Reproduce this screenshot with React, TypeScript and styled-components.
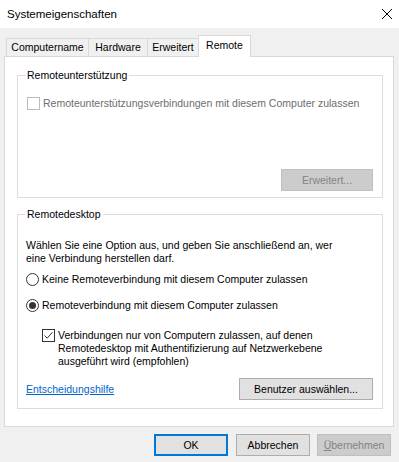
import React from "react";
import styled, { createGlobalStyle } from "styled-components";

const GlobalStyle = createGlobalStyle`
  html, body { margin: 0; padding: 0; background: #f0f0f0; }
  body {
    font-family: "Liberation Sans", Arial, sans-serif;
    font-size: 10.5px;
    color: #000;
  }
  * { box-sizing: border-box; }
`;

const Window = styled.div`
  width: 399px;
  height: 462px;
  background: #f0f0f0;
  display: flex;
  flex-direction: column;
  overflow: hidden;
`;

const TitleBar = styled.div`
  height: 28px;
  flex: none;
  background: #fff;
  display: flex;
  align-items: center;
  justify-content: space-between;
  padding: 0 7px 0 7px;
`;

const Title = styled.span`
  font-size: 11.5px;
  line-height: 14px;
`;

const CloseIcon = styled.svg`
  width: 10px;
  height: 10px;
  display: block;
`;

const Body = styled.div`
  padding: 7px 5px 0 4px;
  display: flex;
  flex-direction: column;
`;

const TabStrip = styled.div`
  display: flex;
  align-items: flex-end;
  height: 21px;
  padding-left: 2px;
`;

const Tab = styled.div<{ $w: number; $active?: boolean }>`
  width: ${(p) => p.$w}px;
  height: ${(p) => (p.$active ? 22 : 18)}px;
  margin-left: -1px;
  margin-bottom: ${(p) => (p.$active ? -1 : 0)}px;
  padding-bottom: ${(p) => (p.$active ? 2 : 0)}px;
  border: 1px solid #d9d9d9;
  border-bottom: none;
  background: ${(p) => (p.$active ? "#fff" : "#f0f0f0")};
  display: flex;
  align-items: center;
  justify-content: center;
  position: relative;
  z-index: ${(p) => (p.$active ? 1 : 0)};
  white-space: nowrap;
  line-height: 13px;
  &:first-child { margin-left: 0; }
`;

const Panel = styled.div`
  height: 371px;
  border: 1px solid #d9d9d9;
  background: #fff;
  padding: 12px 10px 0 12px;
  display: flex;
  flex-direction: column;
`;

const Group = styled.fieldset<{ $h: number; $gap?: number }>`
  margin: ${(p) => p.$gap ?? 0}px 0 0 0;
  padding: 0;
  border: 1px solid #dcdcdc;
  height: ${(p) => p.$h}px;
  min-width: 0;
  flex: none;
`;

const Legend = styled.legend`
  padding: 0 2px;
  margin-left: 7px;
  line-height: 13px;
`;

const Row = styled.div<{ $top: number; $left: number; $disabled?: boolean }>`
  display: flex;
  align-items: flex-start;
  gap: 3px;
  margin: ${(p) => p.$top}px 0 0 ${(p) => p.$left}px;
  line-height: 13px;
  white-space: nowrap;
  color: ${(p) => (p.$disabled ? "#6d6d6d" : "#000")};
`;

const CheckBox = styled.span<{ $disabled?: boolean }>`
  width: 13px;
  height: 13px;
  flex: none;
  border: 1px solid ${(p) => (p.$disabled ? "#bcbcbc" : "#333")};
  background: #fff;
  display: flex;
  align-items: center;
  justify-content: center;
`;

const Radio = styled.span`
  width: 13px;
  height: 13px;
  flex: none;
  border: 1px solid #333;
  border-radius: 50%;
  background: #fff;
  display: flex;
  align-items: center;
  justify-content: center;
`;

const RadioDot = styled.span`
  width: 7px;
  height: 7px;
  border-radius: 50%;
  background: #333;
`;

const Paragraph = styled.p<{ $top: number; $left: number }>`
  margin: ${(p) => p.$top}px 0 0 ${(p) => p.$left}px;
  line-height: 13px;
  white-space: nowrap;
`;

const ActionRow = styled.div<{ $top: number }>`
  display: flex;
  align-items: center;
  justify-content: space-between;
  margin-top: ${(p) => p.$top}px;
  padding: 0 9px 0 8px;
`;

const EndRow = styled(ActionRow)`
  justify-content: flex-end;
`;

const Link = styled.a`
  color: #0066cc;
  text-decoration: underline;
  line-height: 13px;
  cursor: pointer;
`;

const Button = styled.button<{ $w: number; $variant?: "default" | "primary" | "disabled" }>`
  width: ${(p) => p.$w}px;
  height: 22px;
  padding: 0;
  margin: 0;
  font-family: inherit;
  font-size: 10.5px;
  line-height: 13px;
  border: ${(p) =>
    p.$variant === "primary"
      ? "2px solid #0078d7"
      : p.$variant === "disabled"
      ? "1px solid #bfbfbf"
      : "1px solid #adadad"};
  background: ${(p) => (p.$variant === "disabled" ? "#cccccc" : "#e1e1e1")};
  color: ${(p) => (p.$variant === "disabled" ? "#838383" : "#000")};
  flex: none;
`;

const Footer = styled.div`
  display: flex;
  justify-content: flex-end;
  gap: 8px;
  margin-top: 7px;
  padding-right: 3px;
  & > :last-child { margin-left: -1px; }
`;

const AccessKey = styled.span`
  text-decoration: underline;
`;

const Check = () => (
  <svg width="11" height="11" viewBox="0 0 11 11">
    <path d="M1.5 5.5 L4.2 8.2 L9.5 2.2" fill="none" stroke="#333" strokeWidth="1" />
  </svg>
);

export default function App() {
  return (
    <>
      <GlobalStyle />
      <Window>
        <TitleBar>
          <Title>Systemeigenschaften</Title>
          <CloseIcon viewBox="0 0 10 10">
            <path d="M0 0 L10 10 M10 0 L0 10" stroke="#000" strokeWidth="1" />
          </CloseIcon>
        </TitleBar>
        <Body>
          <TabStrip>
            <Tab $w={83}>Computername</Tab>
            <Tab $w={60}>Hardware</Tab>
            <Tab $w={52}>Erweitert</Tab>
            <Tab $w={53} $active>Remote</Tab>
          </TabStrip>
          <Panel>
            <Group $h={129}>
              <Legend>Remoteunterstützung</Legend>
              <Row $top={15} $left={9} $disabled>
                <CheckBox $disabled />
                <span>Remoteunterstützungsverbindungen mit diesem Computer zulassen</span>
              </Row>
              <EndRow $top={59}>
                <Button $w={92} $variant="disabled">Erweitert...</Button>
              </EndRow>
            </Group>
            <Group $h={201} $gap={10}>
              <Legend>Remotedesktop</Legend>
              <Paragraph $top={18} $left={8}>
                Wählen Sie eine Option aus, und geben Sie anschließend an, wer
                <br />
                eine Verbindung herstellen darf.
              </Paragraph>
              <Row $top={8} $left={8}>
                <Radio />
                <span>Keine Remoteverbindung mit diesem Computer zulassen</span>
              </Row>
              <Row $top={13} $left={8}>
                <Radio>
                  <RadioDot />
                </Radio>
                <span>Remoteverbindung mit diesem Computer zulassen</span>
              </Row>
              <Row $top={17} $left={24}>
                <CheckBox>
                  <Check />
                </CheckBox>
                <span>
                  Verbindungen nur von Computern zulassen, auf denen
                  <br />
                  Remotedesktop mit Authentifizierung auf Netzwerkebene
                  <br />
                  ausgeführt wird (empfohlen)
                </span>
              </Row>
              <ActionRow $top={10}>
                <Link>Entscheidungshilfe</Link>
                <Button $w={134}>Benutzer auswählen...</Button>
              </ActionRow>
            </Group>
          </Panel>
          <Footer>
            <Button $w={74} $variant="primary">OK</Button>
            <Button $w={74}>Abbrechen</Button>
            <Button $w={74} $variant="disabled">
              <AccessKey>Ü</AccessKey>bernehmen
            </Button>
          </Footer>
        </Body>
      </Window>
    </>
  );
}
